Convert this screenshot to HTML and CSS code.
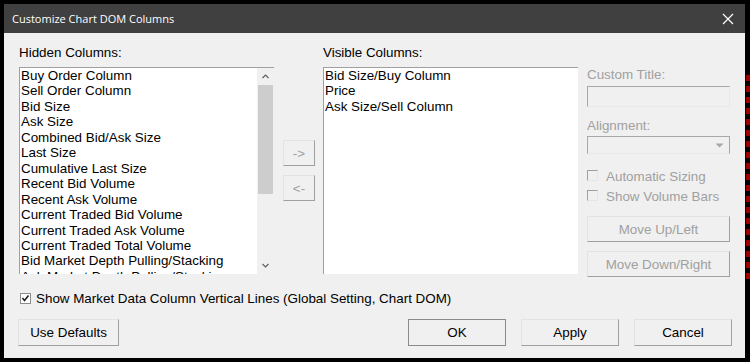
FILE: index.html
```html
<!DOCTYPE html>
<html lang="en">
<head>
    <meta charset="UTF-8">
    <title>Customize Chart DOM Columns</title>
    <link rel="stylesheet" href="styles.css">
</head>
<body>

    <!-- Dialog window -->
    <div class="dialog">
        <div class="titlebar">
            <span class="title">Customize Chart DOM Columns</span>
            <svg class="close" width="12" height="12" viewBox="0 0 12 12">
                <path d="M1 1L11 11M11 1L1 11" stroke="#ffffff" stroke-width="1.2" fill="none"/>
            </svg>
        </div>

        <div class="body">
            <div class="columns">
                <!-- Hidden columns list -->
                <div class="col">
                    <div class="label">Hidden Columns:</div>
                    <div class="listbox">
                        <div class="items">
                            <div>Buy Order Column</div>
                            <div>Sell Order Column</div>
                            <div>Bid Size</div>
                            <div>Ask Size</div>
                            <div>Combined Bid/Ask Size</div>
                            <div>Last Size</div>
                            <div>Cumulative Last Size</div>
                            <div>Recent Bid Volume</div>
                            <div>Recent Ask Volume</div>
                            <div>Current Traded Bid Volume</div>
                            <div>Current Traded Ask Volume</div>
                            <div>Current Traded Total Volume</div>
                            <div>Bid Market Depth Pulling/Stacking</div>
                            <div>Ask Market Depth Pulling/Stacking</div>
                        </div>
                        <div class="scrollbar">
                            <svg class="sb-arrow" width="17" height="17" viewBox="0 0 17 17">
                                <path d="M5.5 10L8.5 7L11.5 10" stroke="#606060" stroke-width="1.2" fill="none"/>
                            </svg>
                            <div class="sb-track">
                                <div class="sb-thumb"></div>
                            </div>
                            <svg class="sb-arrow" width="17" height="17" viewBox="0 0 17 17">
                                <path d="M5.5 7L8.5 10L11.5 7" stroke="#606060" stroke-width="1.2" fill="none"/>
                            </svg>
                        </div>
                    </div>
                </div>

                <!-- Move buttons -->
                <div class="movers">
                    <button class="btn mover" disabled>-&gt;</button>
                    <button class="btn mover" disabled>&lt;-</button>
                </div>

                <!-- Visible columns list -->
                <div class="col">
                    <div class="label">Visible Columns:</div>
                    <div class="listbox">
                        <div class="items">
                            <div>Bid Size/Buy Column</div>
                            <div>Price</div>
                            <div>Ask Size/Sell Column</div>
                        </div>
                    </div>
                </div>

                <!-- Column properties -->
                <div class="props">
                    <div class="label disabled first">Custom Title:</div>
                    <div class="textbox"></div>
                    <div class="label disabled">Alignment:</div>
                    <div class="select">
                        <svg width="9" height="5" viewBox="0 0 9 5">
                            <path d="M0.5 0.5H8.5L4.5 4.5Z" fill="#a8a8a8"/>
                        </svg>
                    </div>
                    <div class="check-row disabled sizing">
                        <span class="box"></span>
                        Automatic Sizing
                    </div>
                    <div class="check-row disabled">
                        <span class="box"></span>
                        Show Volume Bars
                    </div>
                    <button class="btn wide up" disabled>Move Up/Left</button>
                    <button class="btn wide down" disabled>Move Down/Right</button>
                </div>
            </div>

            <div class="check-row global">
                <svg class="box-checked" width="11" height="11" viewBox="0 0 11 11">
                    <rect x="0.5" y="0.5" width="10" height="10" fill="#ffffff" stroke="#8c8c8c"/>
                    <path d="M2.5 5L4.5 7.5L8.5 2.5" stroke="#222222" stroke-width="1.6" fill="none"/>
                </svg>
                Show Market Data Column Vertical Lines (Global Setting, Chart DOM)
            </div>

            <div class="footer">
                <button class="btn action">Use Defaults</button>
                <div class="footer-right">
                    <button class="btn action default">OK</button>
                    <button class="btn action">Apply</button>
                    <button class="btn action">Cancel</button>
                </div>
            </div>
        </div>
    </div>

</body>
</html>
```

FILE: styles.css
```css
* {
    margin: 0;
    padding: 0;
    box-sizing: border-box;
}

/* Chart behind the dialog */
body {
    width: 750px;
    height: 362px;
    overflow: hidden;
    background-color: #000;
    background-image: repeating-linear-gradient(#000 0 5px, #9a0000 5px 11px);
    background-size: 4px 210px;
    background-position: right 0 top 70px;
    background-repeat: no-repeat;
    font-family: "Liberation Sans", Arial, sans-serif;
    font-size: 13.4px;
    color: #000;
}

/* Dialog frame */
.dialog {
    margin: 4px 0 0 4px;
    width: 741px;
    height: 354px;
    background-color: #f0f0f0;
    display: flex;
    flex-direction: column;
}

.titlebar {
    height: 29px;
    background-color: #404040;
    display: flex;
    align-items: center;
    justify-content: space-between;
    padding: 0 11px 0 8px;
}

.title {
    font-family: "Open Sans", "Noto Sans", sans-serif;
    font-size: 11px;
    color: #fff;
}

.body {
    flex: 1;
    padding: 12px 13px 0 15px;
    display: flex;
    flex-direction: column;
}

/* Upper area with two lists */
.columns {
    display: flex;
    align-items: flex-start;
}

.col {
    width: 255px;
    display: flex;
    flex-direction: column;
}

.label {
    line-height: 16px;
    white-space: nowrap;
}

.listbox {
    margin-top: 6px;
    height: 207px;
    background-color: #fff;
    border-top: 1px solid #a0a0a0;
    border-left: 1px solid #a0a0a0;
    display: flex;
    overflow: hidden;
}

.items {
    flex: 1;
    padding: 0 0 0 1px;
    line-height: 15.45px;
    white-space: nowrap;
    overflow: hidden;
}

.scrollbar {
    width: 17px;
    background-color: #f0f0f0;
    display: flex;
    flex-direction: column;
}

.sb-arrow {
    display: block;
    flex: none;
}

.sb-track {
    flex: 1;
    padding: 0 1px;
}

.sb-thumb {
    height: 109px;
    background-color: #cdcdcd;
}

/* Buttons */
.btn {
    font-family: inherit;
    font-size: 13.4px;
    color: #000;
    background-color: #f0f0f0;
    border: 1px solid;
    border-color: #e3e3e3 #a0a0a0 #a0a0a0 #e3e3e3;
}

.btn:disabled {
    color: #a0a0a0;
}

.movers {
    width: 32px;
    margin: 95px 8px 0 9px;
    display: flex;
    flex-direction: column;
    gap: 9px;
}

.mover {
    height: 26px;
}

/* Right side properties */
.props {
    width: 143px;
    margin-left: 9px;
    display: flex;
    flex-direction: column;
}

.disabled {
    color: #a0a0a0;
}

.label.disabled {
    margin-top: 11px;
}

.label.first.disabled {
    margin-top: 22px;
}

.textbox {
    margin-top: 3px;
    height: 21px;
    border-top: 1px solid #a8a8a8;
    border-left: 1px solid #a8a8a8;
    border-right: 1px solid #e8e8e8;
    border-bottom: 1px solid #e8e8e8;
}

.select {
    margin-top: 2px;
    height: 18px;
    border-top: 1px solid #a8a8a8;
    border-left: 1px solid #a8a8a8;
    border-right: 1px solid #a8a8a8;
    border-bottom: 1px solid #e8e8e8;
    display: flex;
    align-items: center;
    justify-content: flex-end;
    padding-right: 5px;
}

.check-row {
    display: flex;
    align-items: center;
    gap: 8px;
    height: 20px;
    white-space: nowrap;
}

.check-row.sizing {
    margin-top: 12px;
}

.box {
    width: 11px;
    height: 11px;
    border-top: 1px solid #a0a0a0;
    border-left: 1px solid #a0a0a0;
    border-right: 1px solid #e6e6e6;
    border-bottom: 1px solid #e6e6e6;
    margin-top: -2px;
}

.wide {
    height: 26px;
}

.wide.up {
    margin-top: 10px;
}

.wide.down {
    margin-top: 9px;
}

/* Global checkbox */
.check-row.global {
    margin-top: 11px;
    padding-left: 1px;
    gap: 5px;
}

.box-checked {
    display: block;
}

/* Dialog buttons */
.footer {
    margin-top: 11px;
    display: flex;
    justify-content: space-between;
}

.footer-right {
    display: flex;
    gap: 15px;
}

.action {
    width: 98px;
    height: 27px;
}

.footer > .action {
    width: 101px;
    margin-left: -1px;
}

.action.default {
    border-color: #8a8a8a;
}
```
